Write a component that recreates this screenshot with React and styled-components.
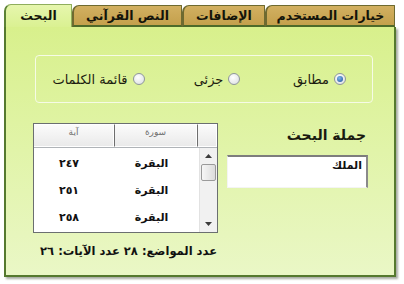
import React from 'react';
import styled, { createGlobalStyle } from 'styled-components';

const GlobalStyle = createGlobalStyle`
  html, body {
    margin: 0;
    padding: 0;
    background: #ffffff;
  }
  body {
    font-family: "DejaVu Sans", "Noto Sans", sans-serif;
  }
`;

const Screen = styled.div`
  width: 404px;
  height: 284px;
  padding: 4px 0 0 4px;
  box-sizing: border-box;
  background: #ffffff;
`;

const Window = styled.div`
  width: 392px;
  direction: rtl;
`;

const TabBar = styled.div`
  display: flex;
  align-items: flex-end;
  height: 23px;
  padding-right: 1px;
`;

const Tab = styled.div`
  width: ${({ w }) => w}px;
  height: ${({ active }) => (active ? 23 : 22)}px;
  box-sizing: border-box;
  display: flex;
  align-items: center;
  justify-content: center;
  font-size: 12.5px;
  font-weight: bold;
  color: #14140a;
  border-top-left-radius: 7px;
  border-top-right-radius: 1px;
  background: ${({ active }) =>
    active ? 'linear-gradient(#e6f6ad, #daf192)' : 'linear-gradient(#d2b061, #c4a04c)'};
  border: 1px solid ${({ active }) => (active ? '#8fae5c' : '#6e6a30')};
  border-left: 2px solid ${({ active }) => (active ? '#5c8236' : '#6e6a30')};
  border-bottom: ${({ active }) => (active ? 'none' : '2px solid #4d6a2a')};
  padding-bottom: ${({ active }) => (active ? 2 : 1)}px;
`;

const Panel = styled.div`
  height: 250px;
  box-sizing: border-box;
  border: 2px solid #55792f;
  border-top: none;
  background: linear-gradient(#d8f08c, #e1f4a9 50%, #eaf7c6);
  box-shadow: 2px 2px 2px rgba(60, 70, 50, 0.45);
  padding-top: 28px;
`;

const RadioBox = styled.div`
  margin: 0 21px 0 29px;
  height: 48px;
  box-sizing: border-box;
  border: 1px solid #f6fbe6;
  border-radius: 4px;
  display: flex;
  align-items: center;
  padding-right: 26px;
`;

const Option = styled.label`
  width: ${({ w }) => w}px;
  display: flex;
  align-items: center;
  gap: 5px;
  font-size: 13px;
  color: #1c1c10;
`;

const Radio = styled.span`
  width: 12px;
  height: 12px;
  box-sizing: border-box;
  border-radius: 50%;
  border: 1px solid #8f969c;
  background: radial-gradient(circle at 40% 35%, #ffffff, #d8dcdf);
  display: flex;
  align-items: center;
  justify-content: center;
  &::after {
    content: '';
    display: ${({ checked }) => (checked ? 'block' : 'none')};
    width: 6px;
    height: 6px;
    border-radius: 50%;
    background: radial-gradient(circle at 40% 35%, #7fb6ec, #1b4f9a);
  }
`;

const Lower = styled.div`
  margin: 20px 26px 0 27px;
  display: grid;
  grid-template-columns: 141px 185px;
  column-gap: 9px;
  align-items: start;
`;

const SearchCol = styled.div`
  display: flex;
  flex-direction: column;
`;

const SearchLabel = styled.div`
  font-size: 14px;
  font-weight: bold;
  color: #1a1a10;
  height: 32px;
  line-height: 24px;
  padding-right: 2px;
`;

const SearchInput = styled.div`
  height: 33px;
  box-sizing: border-box;
  background: #ffffff;
  border: 1px solid #f4f4f4;
  border-top: 2px solid #7d7d7d;
  border-right: 2px solid #8a8a8a;
  padding: 2px 4px 0 0;
  font-size: 11px;
  font-weight: bold;
  color: #111;
`;

const ListCol = styled.div`
  display: flex;
  flex-direction: column;
`;

const List = styled.div`
  height: 110px;
  box-sizing: border-box;
  border: 1px solid #6b6f70;
  background: #ffffff;
  display: flex;
  flex-direction: column;
`;

const HeaderRow = styled.div`
  display: grid;
  grid-template-columns: 20px 83px 1fr;
  height: 23px;
  border-bottom: 1px solid #b0b4b8;
`;

const HeadCell = styled.div`
  box-sizing: border-box;
  background: linear-gradient(#fbfbfb, #eaeaea);
  border: 1px solid #ffffff;
  border-left: 1px solid #6e6e6e;
  font-size: 9px;
  color: #707070;
  display: flex;
  align-items: flex-start;
  justify-content: center;
  padding-top: 2px;
  &:last-child {
    border-left: none;
  }
`;

const Body = styled.div`
  flex: 1;
  display: grid;
  grid-template-columns: 18px 1fr;
  min-height: 0;
`;

const Scrollbar = styled.div`
  background: #f1f1f1;
  border-left: 1px solid #e2e2e2;
  display: flex;
  flex-direction: column;
  align-items: center;
`;

const Arrow = styled.div`
  height: 16px;
  width: 100%;
  display: flex;
  align-items: center;
  justify-content: center;
`;

const Thumb = styled.div`
  width: 15px;
  height: 17px;
  box-sizing: border-box;
  border: 1px solid #9a9a9a;
  border-radius: 2px;
  background: linear-gradient(to right, #f6f6f6, #dcdcdc);
`;

const Track = styled.div`
  flex: 1;
`;

const Rows = styled.div`
  padding-top: 2px;
`;

const Row = styled.div`
  display: grid;
  grid-template-columns: 95px 1fr;
  height: 27px;
  align-items: center;
  font-size: 11px;
  font-weight: bold;
  color: #111;
`;

const Cell = styled.div`
  text-align: center;
`;

const Footer = styled.div`
  margin-top: 11px;
  font-size: 11.5px;
  font-weight: bold;
  color: #111;
  white-space: nowrap;
  padding-right: 1px;
`;

const Tri = ({ up }) => (
  <svg width="7" height="4" viewBox="0 0 7 4">
    <path d={up ? 'M0 4 L3.5 0 L7 4 Z' : 'M0 0 L3.5 4 L7 0 Z'} fill="#3c3c3c" />
  </svg>
);

const tabs = [
  { label: 'خيارات المستخدم', w: 130 },
  { label: 'الإضافات', w: 83 },
  { label: 'النص القرآني', w: 110 },
  { label: 'البحث', w: 68, active: true },
];

const options = [
  { label: 'مطابق', w: 107, checked: true },
  { label: 'جزئى', w: 97 },
  { label: 'قائمة الكلمات', w: 110 },
];

const results = [
  { sura: 'البقرة', aya: '٢٤٧' },
  { sura: 'البقرة', aya: '٢٥١' },
  { sura: 'البقرة', aya: '٢٥٨' },
];

export default function App() {
  return (
    <>
      <GlobalStyle />
      <Screen>
        <Window>
          <TabBar>
            {tabs.map(t => (
              <Tab key={t.label} w={t.w} active={t.active}>
                {t.label}
              </Tab>
            ))}
          </TabBar>
          <Panel>
            <RadioBox>
              {options.map(o => (
                <Option key={o.label} w={o.w}>
                  <Radio checked={o.checked} />
                  {o.label}
                </Option>
              ))}
            </RadioBox>
            <Lower>
              <SearchCol>
                <SearchLabel>جملة البحث</SearchLabel>
                <SearchInput>الملك</SearchInput>
              </SearchCol>
              <ListCol>
                <List>
                  <HeaderRow>
                    <HeadCell />
                    <HeadCell>سورة</HeadCell>
                    <HeadCell>آية</HeadCell>
                  </HeaderRow>
                  <Body>
                    <Scrollbar>
                      <Arrow>
                        <Tri up />
                      </Arrow>
                      <Thumb />
                      <Track />
                      <Arrow>
                        <Tri />
                      </Arrow>
                    </Scrollbar>
                    <Rows>
                      {results.map((r, i) => (
                        <Row key={i}>
                          <Cell>{r.sura}</Cell>
                          <Cell>{r.aya}</Cell>
                        </Row>
                      ))}
                    </Rows>
                  </Body>
                </List>
                <Footer>عدد المواضع: ٢٨ عدد الآيات: ٢٦</Footer>
              </ListCol>
            </Lower>
          </Panel>
        </Window>
      </Screen>
    </>
  );
}
